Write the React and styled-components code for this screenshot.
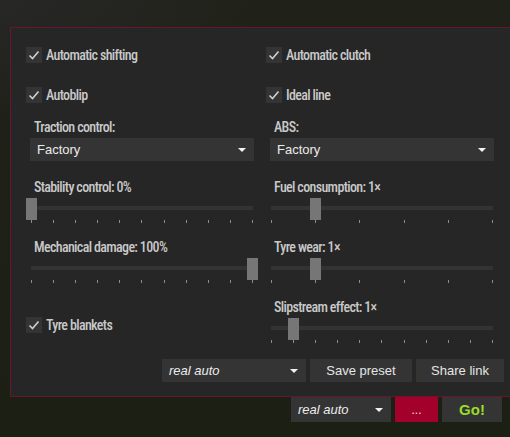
import React from "react";
import styled, { createGlobalStyle } from "styled-components";

const GlobalStyle = createGlobalStyle`
  html, body {
    margin: 0;
    padding: 0;
    overflow: hidden;
    background: #1c1f14;
  }
`;

const Screen = styled.div`
  width: 510px;
  height: 437px;
  box-sizing: border-box;
  padding: 27px 0 0 10px;
  overflow: hidden;
  background:
    radial-gradient(ellipse 260px 120px at 0 0, rgba(40, 40, 40, 0.9), rgba(40, 40, 40, 0)),
    linear-gradient(180deg, #202219 0%, #1c1f14 100%);
  font-family: "Liberation Sans", Arial, sans-serif;
`;

const Panel = styled.div`
  width: 520px;
  box-sizing: border-box;
  padding: 19px 26px 14px 15px;
  background: #262626;
  border: 1px solid #6a1530;
  border-right: none;
`;

const Options = styled.div`
  display: grid;
  grid-template-columns: 228px 228px;
  column-gap: 12px;
`;

const labelFont = `
  font-family: Roboto, "Liberation Sans", sans-serif;
  font-stretch: 75%;
  font-weight: 500;
  font-size: 14px;
  letter-spacing: -0.65px;
  color: #c9c9c9;
`;

const Check = styled.label`
  display: flex;
  align-items: center;
  gap: 4px;
  height: 16px;
  margin-top: ${(p) => p.$mt || 0}px;
  align-self: ${(p) => (p.$end ? "end" : "start")};
  margin-bottom: ${(p) => (p.$end ? 10 : 0)}px;
  ${labelFont}
`;

const Box = styled.span`
  width: 16px;
  height: 16px;
  background: #343434;
  display: flex;
  align-items: center;
  justify-content: center;
`;

const Field = styled.div`
  display: flex;
  flex-direction: column;
  gap: 3px;
  margin-top: ${(p) => p.$mt || 0}px;
`;

const FieldLabel = styled.div`
  margin-left: 8px;
  height: 16px;
  line-height: 16px;
  ${labelFont}
`;

const Select = styled.div`
  margin-left: ${(p) => p.$inset || 0}px;
  width: ${(p) => p.$w}px;
  height: ${(p) => p.$h || 23}px;
  box-sizing: border-box;
  padding: 0 8px 0 7px;
  background: #343434;
  display: flex;
  align-items: center;
  justify-content: space-between;
  color: #ececec;
  font-size: 13px;
  font-style: ${(p) => (p.$italic ? "italic" : "normal")};
`;

const Arrow = styled.span`
  width: 0;
  height: 0;
  border-left: 4px solid transparent;
  border-right: 4px solid transparent;
  border-top: 4px solid #f2f2f2;
`;

const Slider = styled.div`
  position: relative;
  margin-left: 5px;
  width: 222px;
  height: 25px;
`;

const Track = styled.div`
  margin-top: 8px;
  height: 4px;
  background: #333333;
`;

const Thumb = styled.div`
  position: absolute;
  top: 0;
  width: 11px;
  height: 22px;
  background: #767676;
`;

const Ticks = styled.div`
  display: flex;
  justify-content: space-between;
  margin-top: 10px;
`;

const Tick = styled.span`
  width: 1px;
  height: 3px;
  background: #8c8c8c;
`;

const Actions = styled.div`
  display: flex;
  justify-content: flex-end;
  gap: 4px;
  margin-top: 16px;
`;

const Button = styled.button`
  width: ${(p) => p.$w}px;
  height: ${(p) => p.$h || 23}px;
  border: none;
  padding: 0;
  background: ${(p) => p.$bg || "#343434"};
  color: ${(p) => p.$color || "#e6e6e6"};
  font-family: "Liberation Sans", Arial, sans-serif;
  font-size: ${(p) => p.$size || 13}px;
  font-weight: ${(p) => (p.$bold ? 700 : 400)};
  display: flex;
  align-items: center;
  justify-content: center;
`;

const LaunchBar = styled.div`
  width: 500px;
  box-sizing: border-box;
  padding-right: 8px;
  display: flex;
  justify-content: flex-end;
  gap: 4px;
`;

const CheckMark = () => (
  <svg width="16" height="16" viewBox="0 0 16 16">
    <polyline points="3.5,8.5 6.5,11.5 12.5,4.5" fill="none" stroke="#cfcfcf" strokeWidth="1.6" />
  </svg>
);

function Checkbox({ label, mt, end }) {
  return (
    <Check $mt={mt} $end={end}>
      <Box>
        <CheckMark />
      </Box>
      {label}
    </Check>
  );
}

function Dropdown({ value, w, h, inset, italic }) {
  return (
    <Select $w={w} $h={h} $inset={inset} $italic={italic}>
      <span>{value}</span>
      <Arrow />
    </Select>
  );
}

function Range({ ticks, value }) {
  return (
    <Slider>
      <Track />
      <Thumb style={{ left: `${value * 221 - 5}px` }} />
      <Ticks>
        {Array.from({ length: ticks }).map((_, i) => (
          <Tick key={i} />
        ))}
      </Ticks>
    </Slider>
  );
}

function SliderField({ label, ticks, value, mt }) {
  return (
    <Field $mt={mt}>
      <FieldLabel>{label}</FieldLabel>
      <Range ticks={ticks} value={value} />
    </Field>
  );
}

export default function App() {
  return (
    <Screen>
      <GlobalStyle />
      <Panel>
        <Options>
          <Checkbox label="Automatic shifting" />
          <Checkbox label="Automatic clutch" />
          <Checkbox label="Autoblip" mt={24} />
          <Checkbox label="Ideal line" mt={24} />
          <Field $mt={16}>
            <FieldLabel>Traction control:</FieldLabel>
            <Dropdown value="Factory" w={224} inset={4} />
          </Field>
          <Field $mt={16}>
            <FieldLabel>ABS:</FieldLabel>
            <Dropdown value="Factory" w={224} inset={4} />
          </Field>
          <SliderField label="Stability control: 0%" ticks={11} value={0} mt={18} />
          <SliderField label="Fuel consumption: 1×" ticks={6} value={0.2} mt={18} />
          <SliderField label="Mechanical damage: 100%" ticks={11} value={1} mt={16} />
          <SliderField label="Tyre wear: 1×" ticks={6} value={0.2} mt={16} />
          <Checkbox label="Tyre blankets" end />
          <SliderField label="Slipstream effect: 1×" ticks={11} value={0.1} mt={16} />
        </Options>
        <Actions>
          <Dropdown value="real auto" w={144} italic />
          <Button $w={102}>Save preset</Button>
          <Button $w={88}>Share link</Button>
        </Actions>
      </Panel>
      <LaunchBar>
        <Dropdown value="real auto" w={100} h={25} italic />
        <Button $w={43} $h={25} $bg="#a3002b" $color="#f0e0e6" $size={12}>
          ...
        </Button>
        <Button $w={60} $h={25} $bold $size={15} $color="#9bdc2a">
          Go!
        </Button>
      </LaunchBar>
    </Screen>
  );
}
